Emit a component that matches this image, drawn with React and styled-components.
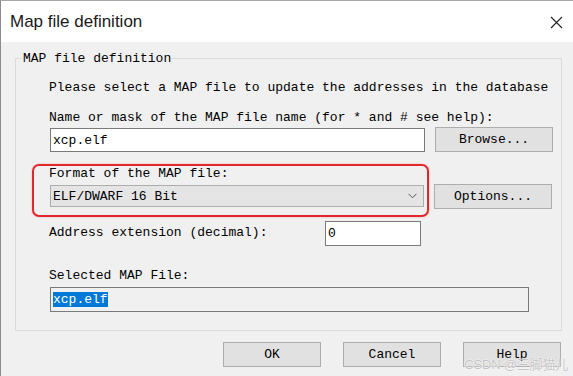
import React from 'react';
import styled, { createGlobalStyle } from 'styled-components';

const GlobalStyle = createGlobalStyle`
  html, body {
    margin: 0;
    padding: 0;
    background: #f0f0f0;
  }
  * {
    box-sizing: border-box;
  }
`;

const Window = styled.div`
  position: relative;
  width: 573px;
  height: 376px;
  overflow: hidden;
  background: #f0f0f0;
  border-left: 1px solid #8c8c8c;
  border-top: 1px solid #a8a8a8;
  font-family: "Liberation Mono", "DejaVu Sans Mono", monospace;
  font-size: 13px;
  color: #000;
`;

const TitleBar = styled.div`
  height: 41px;
  background: #fff;
  display: flex;
  align-items: center;
  justify-content: space-between;
  padding: 0 10px 0 9px;
`;

const Title = styled.div`
  font-family: "Liberation Sans", Arial, sans-serif;
  font-size: 17px;
  color: #1a1a1a;
  margin-top: 1px;
`;

const CloseIcon = () => (
  <svg width="13" height="13" viewBox="0 0 13 13" style={{ marginTop: 2 }}>
    <path d="M1 1 L12 12 M12 1 L1 12" stroke="#222" strokeWidth="1.1" fill="none" />
  </svg>
);

const Content = styled.div`
  padding: 8px 0 0 14px;
`;

const GroupBox = styled.fieldset`
  width: 547px;
  margin: 0;
  padding: 0 0 0 6px;
  border: 1px solid #dadada;
  min-inline-size: 0;
`;

const Legend = styled.legend`
  padding: 0 1px;
  line-height: 17px;
  height: 17px;
`;

const GroupBody = styled.div`
  display: flex;
  flex-direction: column;
  padding: 13px 0 18px 27px;
`;

const Label = styled.div`
  line-height: 16px;
  height: 16px;
  white-space: pre;
  margin-top: ${p => p.$mt || 0}px;
`;

const Row = styled.div`
  display: flex;
  align-items: ${p => p.$align || 'flex-start'};
  gap: 10px;
  margin-top: ${p => p.$mt || 0}px;
  margin-left: 1px;
`;

const TextBox = styled.div`
  width: ${p => p.$w}px;
  height: ${p => p.$h || 24}px;
  border: 1px solid #7a7a7a;
  background: ${p => (p.$readOnly ? '#f0f0f0' : '#fff')};
  display: flex;
  align-items: center;
  padding-left: 2px;
  white-space: pre;
`;

const Selected = styled.span`
  background: #0078d7;
  color: #fff;
  line-height: 15px;
`;

const Button = styled.div`
  width: ${p => p.$w || 118}px;
  height: 25px;
  background: #e1e1e1;
  border: 1px solid #adadad;
  display: flex;
  align-items: center;
  justify-content: center;
  margin-top: ${p => p.$mt || 0}px;
`;

const FormatBlock = styled.div`
  position: relative;
  display: flex;
  flex-direction: column;
  margin-top: 14px;
`;

const Highlight = styled.div`
  position: absolute;
  left: -17px;
  top: -2px;
  width: 397px;
  height: 53px;
  border: 2px solid #e3262c;
  border-radius: 7px;
  box-shadow: 0 0 2px rgba(227, 38, 44, 0.35);
  pointer-events: none;
`;

const Combo = styled.div`
  width: 374px;
  height: 22px;
  margin: 3px 0 0 1px;
  background: #e5e5e5;
  border: 1px solid #adadad;
  display: flex;
  align-items: center;
  justify-content: space-between;
  padding: 0 6px 0 2px;
  white-space: pre;
`;

const Chevron = () => (
  <svg width="9" height="6" viewBox="0 0 9 6">
    <path d="M0.5 0.8 L4.5 4.8 L8.5 0.8" stroke="#555" strokeWidth="1" fill="none" />
  </svg>
);

const FormatRow = styled.div`
  display: flex;
  align-items: flex-end;
  gap: 10px;
`;

const AddressRow = styled.div`
  display: grid;
  grid-template-columns: 276px 96px;
  align-items: center;
  margin-top: 14px;
  height: 25px;
`;

const Footer = styled.div`
  display: flex;
  justify-content: flex-end;
  gap: 22px;
  padding: 11px 12px 0 0;
`;

const Watermark = styled.div`
  position: absolute;
  right: 5px;
  bottom: 3px;
  font-family: "Liberation Sans", "Noto Sans CJK SC", sans-serif;
  font-size: 13px;
  color: #c4c4c4;
  text-shadow: 0 0 2px #fff, 0 0 1px #fff;
  letter-spacing: -0.2px;
`;

export default function App() {
  return (
    <>
      <GlobalStyle />
      <Window>
        <TitleBar>
          <Title>Map file definition</Title>
          <CloseIcon />
        </TitleBar>
        <Content>
          <GroupBox>
            <Legend>MAP file definition</Legend>
            <GroupBody>
              <Label>Please select a MAP file to update the addresses in the database</Label>
              <Label $mt={14}>Name or mask of the MAP file name (for * and # see help):</Label>
              <Row $mt={2}>
                <TextBox $w={375}>xcp.elf</TextBox>
                <Button $mt={-1}>Browse...</Button>
              </Row>
              <FormatRow>
                <FormatBlock>
                  <Highlight />
                  <Label>Format of the MAP file:</Label>
                  <Combo>
                    <span>ELF/DWARF 16 Bit</span>
                    <Chevron />
                  </Combo>
                </FormatBlock>
                <Button $mt={0} style={{ marginBottom: -2 }}>Options...</Button>
              </FormatRow>
              <AddressRow>
                <Label style={{ marginTop: -2 }}>Address extension (decimal):</Label>
                <TextBox $w={96} $h={25}>0</TextBox>
              </AddressRow>
              <Label $mt={22}>Selected MAP File:</Label>
              <Row $mt={3}>
                <TextBox $w={479} $h={25} $readOnly>
                  <Selected>xcp.elf</Selected>
                </TextBox>
              </Row>
            </GroupBody>
          </GroupBox>
        </Content>
        <Footer>
          <Button $w={98}>OK</Button>
          <Button $w={98}>Cancel</Button>
          <Button $w={98}>Help</Button>
        </Footer>
        <Watermark>CSDN @三脚猫儿</Watermark>
      </Window>
    </>
  );
}
